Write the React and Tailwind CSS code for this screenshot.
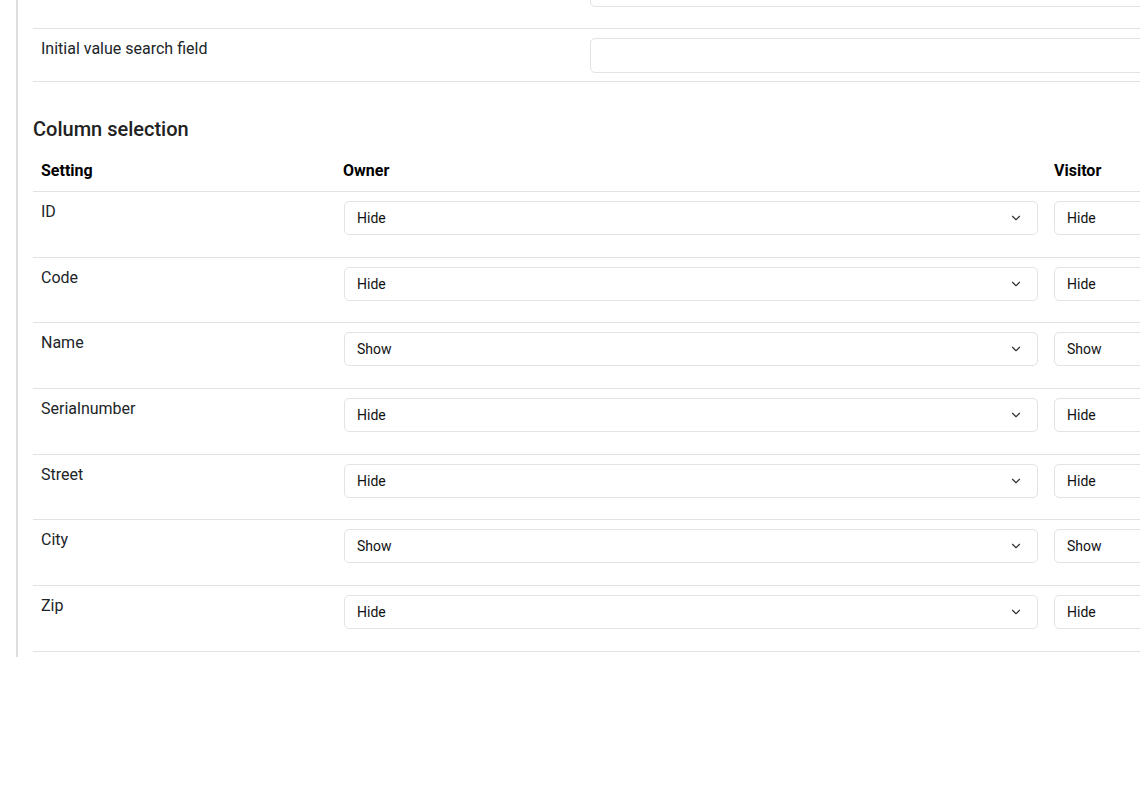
import { ChevronDown } from "lucide-react";

const columns = [
  { name: "ID", owner: "Hide", visitor: "Hide" },
  { name: "Code", owner: "Hide", visitor: "Hide" },
  { name: "Name", owner: "Show", visitor: "Show" },
  { name: "Serialnumber", owner: "Hide", visitor: "Hide" },
  { name: "Street", owner: "Hide", visitor: "Hide" },
  { name: "City", owner: "Show", visitor: "Show" },
  { name: "Zip", owner: "Hide", visitor: "Hide" },
];

const SelectBox = ({ value, className }) => (
  <div
    className={`h-[34px] flex items-center justify-between border border-[#e3e3e3] rounded-[5px] bg-white pl-3 pr-[14px] text-[14px] text-[#111] ${className}`}
  >
    <span>{value}</span>
    <ChevronDown size={14} strokeWidth={2} className="text-[#333]" />
  </div>
);

const App = () => {
  return (
    <div className="w-[1140px] h-[793px] overflow-hidden bg-white font-['Roboto',sans-serif] text-[#212529]">
      <div className="ml-4 w-[1500px] border-l-2 border-[#dedede] pl-[15px] pb-[5px] -mt-[38px]">
        {/* form rows */}
        <div className="flex border-b border-[#e2e2e2] h-[67px]">
          <div className="w-[549px] px-2 pt-[9px] text-[16px]"></div>
          <div className="flex-1 px-2 pt-[10px]">
            <div className="h-[35px] border border-[#e3e3e3] rounded-[5px]"></div>
          </div>
        </div>
        <div className="flex border-b border-[#e2e2e2] h-[53px]">
          <div className="w-[549px] px-2 pt-[9px] text-[16px] leading-[22px]">
            Initial value search field
          </div>
          <div className="flex-1 px-2 pt-[9px]">
            <div className="h-[35px] border border-[#e3e3e3] rounded-[5px]"></div>
          </div>
        </div>

        <h2 className="mt-[32px] text-[20px] leading-[30px] font-medium text-[#222]">
          Column selection
        </h2>

        {/* column selection table */}
        <div className="flex border-b border-[#e2e2e2] pt-[16px] pb-[9px] text-[16px] leading-[22px] font-bold text-black">
          <div className="w-[302px] px-2">Setting</div>
          <div className="w-[711px] px-2">Owner</div>
          <div className="flex-1 px-2">Visitor</div>
        </div>
        {columns.map((col) => (
          <div
            key={col.name}
            className="flex border-b border-[#e2e2e2] h-[65.7px] text-[16px] leading-[22px]"
          >
            <div className="w-[303px] px-2 pt-[9px]">{col.name}</div>
            <div className="w-[710px] px-2 pt-[9px]">
              <SelectBox value={col.owner} />
            </div>
            <div className="flex-1 px-2 pt-[9px]">
              <SelectBox value={col.visitor} className="w-[300px]" />
            </div>
          </div>
        ))}
      </div>
    </div>
  );
};

export default App;
